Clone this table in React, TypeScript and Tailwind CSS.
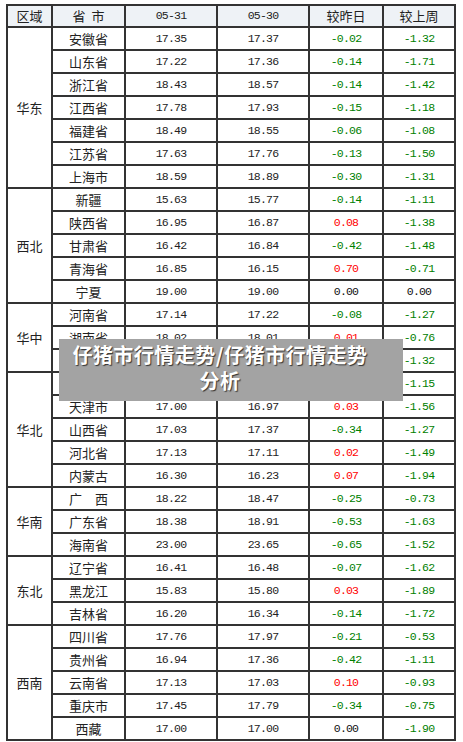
type Row = [string, string, string, string, string];

const groups: { region: string; rows: Row[] }[] = [
  {
    region: "华东",
    rows: [
      ["安徽省", "17.35", "17.37", "-0.02", "-1.32"],
      ["山东省", "17.22", "17.36", "-0.14", "-1.71"],
      ["浙江省", "18.43", "18.57", "-0.14", "-1.42"],
      ["江西省", "17.78", "17.93", "-0.15", "-1.18"],
      ["福建省", "18.49", "18.55", "-0.06", "-1.08"],
      ["江苏省", "17.63", "17.76", "-0.13", "-1.50"],
      ["上海市", "18.59", "18.89", "-0.30", "-1.31"],
    ],
  },
  {
    region: "西北",
    rows: [
      ["新疆", "15.63", "15.77", "-0.14", "-1.11"],
      ["陕西省", "16.95", "16.87", "0.08", "-1.38"],
      ["甘肃省", "16.42", "16.84", "-0.42", "-1.48"],
      ["青海省", "16.85", "16.15", "0.70", "-0.71"],
      ["宁夏", "19.00", "19.00", "0.00", "0.00"],
    ],
  },
  {
    region: "华中",
    rows: [
      ["河南省", "17.14", "17.22", "-0.08", "-1.27"],
      ["湖南省", "18.02", "18.01", "0.01", "-0.76"],
      ["湖北省", "17.24", "17.35", "-0.11", "-1.32"],
    ],
  },
  {
    region: "华北",
    rows: [
      ["北京市", "17.20", "17.28", "-0.08", "-1.15"],
      ["天津市", "17.00", "16.97", "0.03", "-1.56"],
      ["山西省", "17.03", "17.37", "-0.34", "-1.27"],
      ["河北省", "17.13", "17.11", "0.02", "-1.49"],
      ["内蒙古", "16.30", "16.23", "0.07", "-1.94"],
    ],
  },
  {
    region: "华南",
    rows: [
      ["广\u3000西", "18.22", "18.47", "-0.25", "-0.73"],
      ["广东省", "18.38", "18.91", "-0.53", "-1.63"],
      ["海南省", "23.00", "23.65", "-0.65", "-1.52"],
    ],
  },
  {
    region: "东北",
    rows: [
      ["辽宁省", "16.41", "16.48", "-0.07", "-1.62"],
      ["黑龙江", "15.83", "15.80", "0.03", "-1.89"],
      ["吉林省", "16.20", "16.34", "-0.14", "-1.72"],
    ],
  },
  {
    region: "西南",
    rows: [
      ["四川省", "17.76", "17.97", "-0.21", "-0.53"],
      ["贵州省", "16.94", "17.36", "-0.42", "-1.11"],
      ["云南省", "17.13", "17.03", "0.10", "-0.93"],
      ["重庆市", "17.45", "17.79", "-0.34", "-0.75"],
      ["西藏", "17.00", "17.00", "0.00", "-1.90"],
    ],
  },
];

const cjk = "font-['Noto_Sans_CJK_SC',sans-serif] text-[13px]";
const num = "font-['Liberation_Mono',monospace] text-[11.5px] tracking-[-0.8px]";

function changeColor(v: string) {
  if (v.startsWith("-")) return "text-[#008000]";
  if (v === "0.00") return "text-[#111]";
  return "text-[#ff0000]";
}

export default function App() {
  return (
    <div className="relative w-[463px] h-[742px] bg-white text-[#222] pt-[4px] pl-[6px]">
      <table className="table-fixed w-[448px] border-2 border-[#333]">
        <colgroup>
          <col className="w-[45px]" />
          <col className="w-[73px]" />
          <col className="w-[92px]" />
          <col className="w-[92px]" />
          <col className="w-[74px]" />
          <col className="w-[72px]" />
        </colgroup>
        <thead>
          <tr className="h-[22px] bg-[#eef2f6]">
            <th className={`${cjk} font-normal border-2 border-[#333] p-0`}>区域</th>
            <th className={`${cjk} font-normal border-2 border-[#333] p-0`}>省&nbsp;&nbsp;市</th>
            <th className={`${num} font-normal border-2 border-[#333] p-0`}>05-31</th>
            <th className={`${num} font-normal border-2 border-[#333] p-0`}>05-30</th>
            <th className={`${cjk} font-normal border-2 border-[#333] p-0`}>较昨日</th>
            <th className={`${cjk} font-normal border-2 border-[#333] p-0`}>较上周</th>
          </tr>
        </thead>
        <tbody>
          {groups.map((g) =>
            g.rows.map((r, i) => (
              <tr key={g.region + r[0]} className="h-[23px]">
                {i === 0 && (
                  <td
                    rowSpan={g.rows.length}
                    className={`${cjk} text-center align-middle border-2 border-[#333] p-0`}
                  >
                    {g.region}
                  </td>
                )}
                <td className={`${cjk} text-center border-2 border-[#333] p-0`}>{r[0]}</td>
                <td className={`${num} text-center border-2 border-[#333] p-0`}>{r[1]}</td>
                <td className={`${num} text-center border-2 border-[#333] p-0`}>{r[2]}</td>
                <td className={`${num} text-center border-2 border-[#333] p-0 ${changeColor(r[3])}`}>
                  {r[3]}
                </td>
                <td className={`${num} text-center border-2 border-[#333] p-0 ${changeColor(r[4])}`}>
                  {r[4]}
                </td>
              </tr>
            ))
          )}
        </tbody>
      </table>

      {/* title banner over the table */}
      <div className="absolute left-[59px] top-[339px] w-[344px] h-[62px] bg-[#a3a3a3] pt-[3px] pl-[10px]">
        <div className="w-[302px] whitespace-nowrap text-center text-white font-bold text-[20px] leading-[26px] tracking-[0.5px] font-['Noto_Sans_CJK_SC',sans-serif] [text-shadow:1px_1px_1px_#333]">
          仔猪市行情走势/仔猪市行情走势
          <br />
          分析
        </div>
      </div>
    </div>
  );
}
